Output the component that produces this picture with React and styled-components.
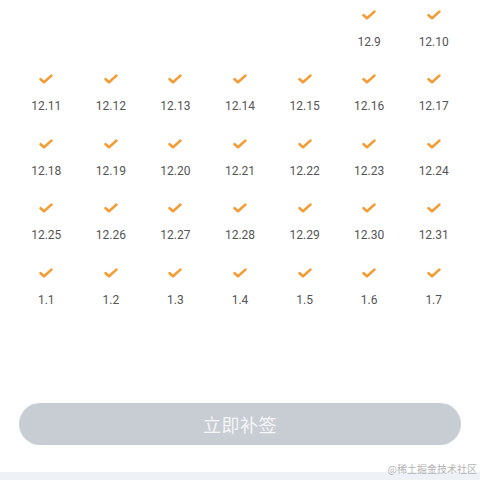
import React from 'react';
import styled, { createGlobalStyle } from 'styled-components';

const Global = createGlobalStyle`
  html, body {
    margin: 0;
    padding: 0;
    background: #ffffff;
  }
  #root {
    height: 100vh;
  }
`;

const Page = styled.main`
  position: relative;
  display: flex;
  flex-direction: column;
  height: 100vh;
  font-family: Roboto, "Noto Sans CJK SC", sans-serif;
`;

const Grid = styled.div`
  display: grid;
  grid-template-columns: repeat(7, 1fr);
  grid-auto-rows: 64.4px;
  padding: 0 14px;
`;

const Cell = styled.div`
  display: flex;
  flex-direction: column;
  align-items: center;
  padding-top: 10px;
`;

const Label = styled.span`
  margin-top: 14px;
  font-size: 12px;
  line-height: 16px;
  color: #555555;
`;

const Spacer = styled.div`
  flex: 1;
`;

const ButtonWrap = styled.div`
  padding: 0 19px;
  margin-bottom: 27px;
`;

const Button = styled.button`
  width: 100%;
  height: 42px;
  border: none;
  border-radius: 21px;
  background: #c8ccd3;
  color: #f5f6f8;
  font-family: "Noto Sans CJK SC", sans-serif;
  font-size: 18px;
  letter-spacing: 0.5px;
`;

const Footer = styled.div`
  height: 8px;
  background: #eef1f5;
`;

const Watermark = styled.span`
  position: absolute;
  right: 3px;
  bottom: 4px;
  font-family: "Noto Sans CJK SC", sans-serif;
  font-size: 10px;
  color: #b4b4b4;
`;

const Check = () => (
  <svg width="14" height="10" viewBox="0 0 14 10">
    <path
      d="M1.6 5.2 L5 8.2 L12.4 1.6"
      fill="none"
      stroke="#f39c34"
      strokeWidth="2.6"
      strokeLinecap="round"
      strokeLinejoin="round"
    />
  </svg>
);

const days = [
  null, null, null, null, null, '12.9', '12.10',
  '12.11', '12.12', '12.13', '12.14', '12.15', '12.16', '12.17',
  '12.18', '12.19', '12.20', '12.21', '12.22', '12.23', '12.24',
  '12.25', '12.26', '12.27', '12.28', '12.29', '12.30', '12.31',
  '1.1', '1.2', '1.3', '1.4', '1.5', '1.6', '1.7'
];

export default function App() {
  return (
    <>
      <Global />
      <Page>
        <Grid>
          {days.map((d, i) => (
            <Cell key={i}>
              {d && (
                <>
                  <Check />
                  <Label>{d}</Label>
                </>
              )}
            </Cell>
          ))}
        </Grid>
        <Spacer />
        <ButtonWrap>
          <Button>立即补签</Button>
        </ButtonWrap>
        <Footer />
        <Watermark>@稀土掘金技术社区</Watermark>
      </Page>
    </>
  );
}
